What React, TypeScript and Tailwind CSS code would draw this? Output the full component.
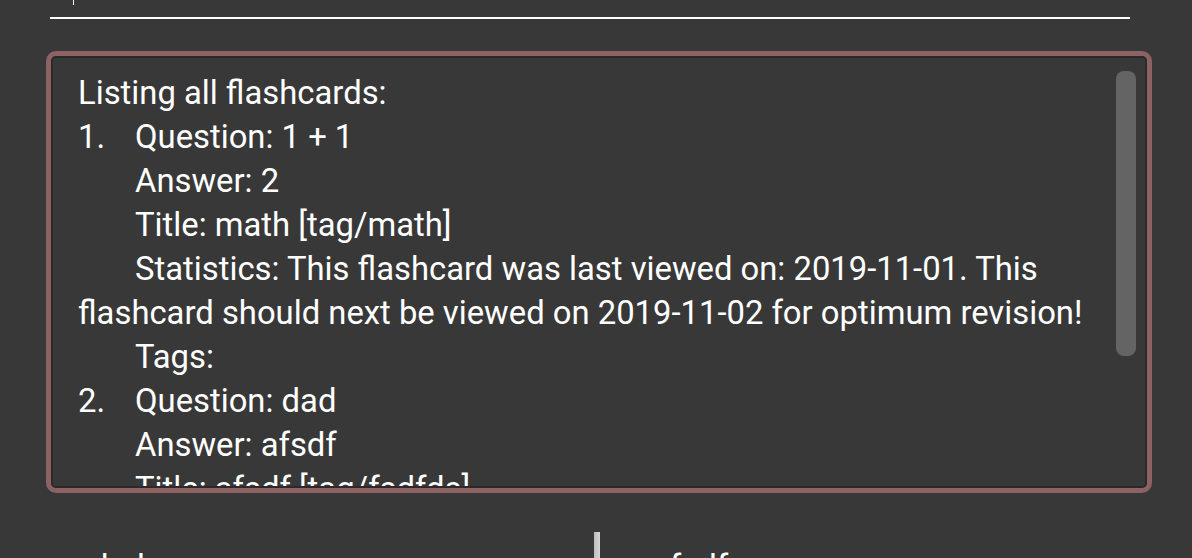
const lines: { num?: string; indent?: boolean; text: string }[] = [
  { text: 'Listing all flashcards:' },
  { num: '1.', text: 'Question: 1 + 1' },
  { indent: true, text: 'Answer: 2' },
  { indent: true, text: 'Title: math [tag/math]' },
  { indent: true, text: 'Statistics: This flashcard was last viewed on: 2019-11-01. This' },
  { text: 'flashcard should next be viewed on 2019-11-02 for optimum revision!' },
  { indent: true, text: 'Tags:' },
  { num: '2.', text: 'Question: dad' },
  { indent: true, text: 'Answer: afsdf' },
  { indent: true, text: 'Title: afsdf [tag/fsdfds]' },
];

export default function App() {
  return (
    <div
      className="w-[1192px] h-[558px] bg-[#383838] overflow-hidden flex flex-col text-white"
      style={{ fontFamily: 'Roboto, "Noto Sans", sans-serif' }}
    >
      {/* command box remnant */}
      <div className="ml-[73px] w-px h-[5px] shrink-0 bg-white" />
      <div className="ml-[50px] mt-[12px] w-[1080px] h-[2px] shrink-0 bg-white" />

      {/* result display */}
      <div className="ml-[46px] mt-[32px] w-[1106px] h-[442px] shrink-0 border-[5px] border-[#8c6262] rounded-[10px] overflow-hidden">
        <div className="h-full flex border-2 border-[#2a2a2a] rounded-[4px]">
          <div className="flex-1 pt-[13px] pl-[25px] text-[32.8px] leading-[44px] overflow-hidden">
            {lines.map((l, i) => (
              <div key={i} className="flex whitespace-nowrap">
                {l.num ? (
                  <span className="w-[57px] shrink-0">{l.num}</span>
                ) : l.indent ? (
                  <span className="w-[57px] shrink-0" />
                ) : null}
                <span>{l.text}</span>
              </div>
            ))}
          </div>
          <div className="w-[20px] mr-[9px] mt-[13px] shrink-0">
            <div className="h-[285px] rounded-[8px] bg-[#646464]" />
          </div>
        </div>
      </div>

      {/* flashcard list panes */}
      <div className="mt-[39px] flex h-[40px] shrink-0 text-[32.8px] leading-[44px]">
        <div className="w-[594px] shrink-0 pl-[90px] pt-[13px]">dad</div>
        <div className="w-[6px] shrink-0 bg-gradient-to-r from-[#bdbdbd] to-[#d6d6d6]" />
        <div className="pl-[52px] pt-[13px]">afsdf</div>
      </div>
    </div>
  );
}
